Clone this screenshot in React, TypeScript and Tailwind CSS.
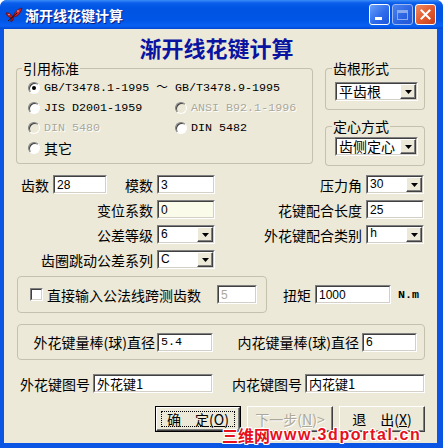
import React from "react";

const CJK = "font-['Noto_Sans_CJK_SC',sans-serif]";
const MONO = "font-['Liberation_Mono','Noto_Sans_CJK_SC',monospace]";
const SANS = "font-['Liberation_Sans','Noto_Sans_CJK_SC',sans-serif]";
const DIS = "text-[#ACA899] [text-shadow:1px_1px_0_#ffffff]";

type Kids = { children?: React.ReactNode };

function Sunken({ className, inner, children }: { className: string; inner: string } & Kids) {
  return (
    <div className={`border border-t-[#808080] border-l-[#808080] border-r-white border-b-white ${className}`}>
      <div className={`w-full h-full border border-t-[#404040] border-l-[#404040] border-r-[#D4D0C8] border-b-[#D4D0C8] flex items-center ${inner}`}>
        {children}
      </div>
    </div>
  );
}

function TextBox({ className, value, font, bg, color }: { className: string; value: string; font?: string; bg?: string; color?: string }) {
  return (
    <Sunken className={className} inner={bg ?? "bg-white"}>
      <span className={`pl-[2px] whitespace-nowrap leading-[14px] ${font ?? `${SANS} text-[12px]`} ${color ?? "text-black"}`}>{value}</span>
    </Sunken>
  );
}

function Select({ className, value, font }: { className: string; value: string; font?: string }) {
  return (
    <Sunken className={className} inner="bg-white">
      <span className={`flex-1 pl-[2px] whitespace-nowrap leading-[15px] text-black ${font ?? `${SANS} text-[12px]`}`}>{value}</span>
      <div className="h-full w-[16px] shrink-0 flex items-center justify-center bg-[#ECE9D8] border border-t-white border-l-white border-r-[#404040] border-b-[#404040] shadow-[inset_-1px_-1px_0_#808080]">
        <svg width="7" height="4" viewBox="0 0 7 4">
          <path d="M0 0H7L3.5 4Z" fill="#000" />
        </svg>
      </div>
    </Sunken>
  );
}

function Label({ children, className }: { className?: string } & Kids) {
  return <span className={`${CJK} text-[14px] leading-[16px] text-black whitespace-nowrap ${className ?? ""}`}>{children}</span>;
}

function GroupBox({ title, className, lead, children }: { title: string; className: string; lead: string } & Kids) {
  return (
    <div className={`flex flex-col ${className}`}>
      <div className="flex h-[16px] shrink-0">
        <div className={`${lead} mt-[8px] border-t border-l border-[#C4C2AF] rounded-tl-[4px]`} />
        <Label className="px-[1px]">{title}</Label>
        <div className="flex-1 mt-[8px] border-t border-r border-[#C4C2AF] rounded-tr-[4px]" />
      </div>
      <div className="flex-1 border-l border-r border-b border-[#C4C2AF] rounded-b-[4px]">{children}</div>
    </div>
  );
}

function Radio({ checked, disabled, children }: { checked?: boolean; disabled?: boolean } & Kids) {
  return (
    <div className="flex items-center h-[20px]">
      <div
        className={`w-[12px] h-[12px] shrink-0 rounded-full border border-t-[#808080] border-l-[#808080] border-r-white border-b-white shadow-[inset_1px_1px_0_#404040] flex items-center justify-center ${
          disabled ? "bg-[#ECE9D8]" : "bg-white"
        }`}
      >
        {checked && <div className="w-[4px] h-[4px] rounded-full bg-black" />}
      </div>
      <div className="ml-[4px] flex items-center">{children}</div>
    </div>
  );
}

function Btn({ children, focus }: { focus?: boolean } & Kids) {
  const inner = (
    <div className="w-full h-full border border-t-white border-l-white border-r-[#404040] border-b-[#404040] shadow-[inset_-1px_-1px_0_#808080] flex items-center justify-center bg-[#ECE9D8]">
      {focus ? (
        <div className="w-[74px] h-[16px] border border-dotted border-black flex items-center justify-center">{children}</div>
      ) : (
        children
      )}
    </div>
  );
  return focus ? (
    <div className="w-[86px] h-[26px] border border-black">{inner}</div>
  ) : (
    <div className="w-[86px] h-[26px]">{inner}</div>
  );
}

function Butterfly() {
  return (
    <svg width="18" height="16" viewBox="0 0 18 16">
      <path d="M8 10 C9 6 12 2 17 1 C16 4 15 7 12 9 Z" fill="#D0202A" stroke="#5A0A10" strokeWidth="0.7" />
      <path d="M8 10 C6 7 3 5 1 6 C2 9 4 11 7 11 Z" fill="#B81822" stroke="#5A0A10" strokeWidth="0.7" />
      <path d="M8 10 C9 12 8 14 6 15 C5 13 6 11 8 10 Z" fill="#A0141C" stroke="#5A0A10" strokeWidth="0.6" />
      <path d="M3 14 L12 6" stroke="#2A0A0A" strokeWidth="1" />
      <circle cx="13" cy="4" r="0.8" fill="#F4C0C0" />
      <circle cx="4" cy="7.5" r="0.7" fill="#F4C0C0" />
    </svg>
  );
}

export default function App() {
  return (
    <div className="relative w-[443px] h-[448px] bg-[#0A55E3] rounded-t-[7px] flex flex-col overflow-hidden">
      {/* Title bar */}
      <div className="h-[29px] shrink-0 flex items-center bg-[linear-gradient(to_bottom,#3C8CF7_0px,#0A5EEB_3px,#0054E3_8px,#0055E6_20px,#0960F2_26px,#0046D2_29px)]">
        <div className="ml-[5px] mt-[1px]">
          <Butterfly />
        </div>
        <span className={`${CJK} ml-[2px] text-[14px] font-bold text-white leading-[16px] [text-shadow:1px_1px_0_#0A1E80]`}>渐开线花键计算</span>
        <div className="ml-auto mr-[7px] flex gap-[2px]">
          <div className="w-[21px] h-[21px] rounded-[3px] border border-white bg-[linear-gradient(135deg,#6AA0FA,#2F6CEB_55%,#1C55DA)] flex items-end pl-[5px] pb-[4px]">
            <div className="w-[7px] h-[3px] bg-white" />
          </div>
          <div className="w-[21px] h-[21px] rounded-[3px] border border-[#9DB8EE] bg-[linear-gradient(135deg,#4C84F0,#2A62E2_60%,#2458D6)] flex items-center justify-center">
            <div className="w-[11px] h-[10px] border border-[#8AAAEE] border-t-[3px]" />
          </div>
          <div className="w-[21px] h-[21px] rounded-[3px] border border-white bg-[linear-gradient(135deg,#F08A60,#E0582C_55%,#C8401C)] flex items-center justify-center">
            <svg width="11" height="11" viewBox="0 0 11 11">
              <path d="M1.5 1.5L9.5 9.5M9.5 1.5L1.5 9.5" stroke="#fff" strokeWidth="2" strokeLinecap="square" />
            </svg>
          </div>
        </div>
      </div>

      {/* Client area */}
      <div className="flex-1 ml-[4px] mr-[6px] mb-[5px] bg-[#ECE9D8] flex flex-col">
        {/* Heading */}
        <div className="mt-[6px] h-[24px] flex justify-center pr-[8px]">
          <span className={`${CJK} text-[22px] leading-[24px] font-bold text-[#0A14A0]`}>渐开线花键计算</span>
        </div>

        {/* Top section */}
        <div className="mt-[1px] h-[106px] flex pl-[12px]">
          <GroupBox title="引用标准" className="w-[297px] h-[104px]" lead="w-[6px]">
            <div className="mt-[2px] pl-[11px] grid grid-cols-[147px_1fr]">
              <div className="col-span-2">
                <Radio checked>
                  <span className={`${MONO} text-[11.7px] leading-[14px] text-black whitespace-nowrap`}>GB/T3478.1-1995 ～ GB/T3478.9-1995</span>
                </Radio>
              </div>
              <Radio>
                <span className={`${MONO} text-[11.7px] leading-[14px] text-black whitespace-nowrap`}>JIS D2001-1959</span>
              </Radio>
              <Radio disabled>
                <span className={`${MONO} text-[11.7px] leading-[14px] whitespace-nowrap ${DIS}`}>ANSI B92.1-1996</span>
              </Radio>
              <Radio disabled>
                <span className={`${MONO} text-[11.7px] leading-[14px] whitespace-nowrap ${DIS}`}>DIN 5480</span>
              </Radio>
              <Radio>
                <span className={`${MONO} text-[11.7px] leading-[14px] text-black whitespace-nowrap`}>DIN 5482</span>
              </Radio>
              <Radio>
                <Label>其它</Label>
              </Radio>
            </div>
          </GroupBox>

          <div className="ml-[12px] w-[100px] flex flex-col">
            <GroupBox title="齿根形式" className="w-[100px] h-[50px]" lead="w-[7px]">
              <div className="mt-[6px] ml-[9px]">
                <Select className="w-[83px] h-[19px]" value="平齿根" font={`${CJK} text-[14px]`} />
              </div>
            </GroupBox>
            <GroupBox title="定心方式" className="mt-[8px] w-[100px] h-[48px]" lead="w-[7px]">
              <div className="mt-[3px] ml-[9px]">
                <Select className="w-[83px] h-[19px]" value="齿侧定心" font={`${CJK} text-[14px]`} />
              </div>
            </GroupBox>
          </div>
        </div>

        {/* Parameter rows */}
        <div className="mt-[9px] flex flex-col gap-[6px]">
          <div className="flex h-[19px] items-center">
            <div className="w-[211px] flex justify-end items-center gap-[4px]">
              <Label>齿数</Label>
              <TextBox className="w-[54px] h-[19px] mr-[14px]" value="28" />
              <Label>模数</Label>
              <TextBox className="w-[58px] h-[19px]" value="3" />
            </div>
            <div className="w-[209px] flex justify-end items-center gap-[4px]">
              <Label>压力角</Label>
              <Select className="w-[58px] h-[19px]" value="30" />
            </div>
          </div>
          <div className="flex h-[19px] items-center">
            <div className="w-[211px] flex justify-end items-center gap-[4px]">
              <Label>变位系数</Label>
              <TextBox className="w-[58px] h-[19px]" value="0" bg="bg-[#FBFBEA]" />
            </div>
            <div className="w-[209px] flex justify-end items-center gap-[4px]">
              <Label>花键配合长度</Label>
              <TextBox className="w-[58px] h-[19px]" value="25" />
            </div>
          </div>
          <div className="flex h-[19px] items-center">
            <div className="w-[211px] flex justify-end items-center gap-[4px]">
              <Label>公差等级</Label>
              <Select className="w-[58px] h-[19px]" value="6" />
            </div>
            <div className="w-[209px] flex justify-end items-center gap-[4px]">
              <Label>外花键配合类别</Label>
              <Select className="w-[58px] h-[19px]" value="h" font={`${MONO} text-[12px]`} />
            </div>
          </div>
          <div className="flex h-[19px] items-center">
            <div className="w-[211px] flex justify-end items-center gap-[4px]">
              <Label>齿圈跳动公差系列</Label>
              <Select className="w-[58px] h-[19px]" value="C" />
            </div>
          </div>
        </div>

        {/* Direct input / torque */}
        <div className="mt-[7px] flex items-center">
          <div className="ml-[13px] w-[250px] h-[37px] border border-[#C4C2AF] rounded-[4px] flex items-center pl-[12px]">
            <div className="w-[13px] h-[13px] border border-t-[#808080] border-l-[#808080] border-r-white border-b-white">
              <div className="w-full h-full bg-white border border-t-[#404040] border-l-[#404040] border-r-[#D4D0C8] border-b-[#D4D0C8]" />
            </div>
            <Label className="ml-[4px]">直接输入公法线跨测齿数</Label>
            <TextBox className="ml-[16px] w-[40px] h-[19px]" value="5" color="text-[#ACA899]" />
          </div>
          <Label className="ml-[16px]">扭矩</Label>
          <TextBox className="ml-[4px] w-[76px] h-[19px]" value="1000" />
          <span className={`${MONO} ml-[7px] text-[11.7px] font-bold text-black leading-[14px]`}>N.m</span>
        </div>

        {/* Measuring pin diameters */}
        <div className="mt-[11px] ml-[13px] w-[408px] h-[36px] border border-[#C4C2AF] rounded-[4px] flex items-center pl-[10px]">
          <div className="w-[127px] flex justify-end">
            <Label>外花键量棒(球)直径</Label>
          </div>
          <TextBox className="ml-[2px] w-[56px] h-[19px]" value="5.4" font={`${MONO} text-[11.7px]`} />
          <div className="ml-[19px] w-[127px] flex justify-end">
            <Label>内花键量棒(球)直径</Label>
          </div>
          <TextBox className="ml-[3px] w-[55px] h-[19px]" value="6" />
        </div>

        {/* Drawing numbers */}
        <div className="mt-[14px] h-[19px] flex items-center">
          <Label className="ml-[16px]">外花键图号</Label>
          <TextBox className="ml-[3px] w-[120px] h-[19px]" value="外花键1" font={`${CJK} text-[13px]`} />
          <Label className="ml-[19px]">内花键图号</Label>
          <TextBox className="ml-[3px] w-[120px] h-[19px]" value="内花键1" font={`${CJK} text-[13px]`} />
        </div>

        {/* Buttons */}
        <div className="mt-[13px] flex justify-end gap-[6px] pr-[12px]">
          <Btn focus>
            <Label>
              确　定(<span className="underline">O</span>)
            </Label>
          </Btn>
          <Btn>
            <span className={`${CJK} text-[14px] leading-[16px] whitespace-nowrap ${DIS}`}>
              下一步(<span className="underline">N</span>)&gt;
            </span>
          </Btn>
          <Btn>
            <Label>
              退　出(<span className="underline">X</span>)
            </Label>
          </Btn>
        </div>
      </div>

      {/* Watermark overlay */}
      <div className="absolute left-[222px] top-[427px] flex items-end text-[#E5101C] font-bold leading-[16px] [text-shadow:1px_0_0_#fff,-1px_0_0_#fff,0_1px_0_#fff,0_-1px_0_#fff,1px_1px_0_#fff,-1px_-1px_0_#fff,1px_-1px_0_#fff,-1px_1px_0_#fff]">
        <span className={`${CJK} text-[16px]`}>三维网</span>
        <span className={`${SANS} text-[16px] tracking-[1.6px]`}>www.3dportal.cn</span>
      </div>
    </div>
  );
}
